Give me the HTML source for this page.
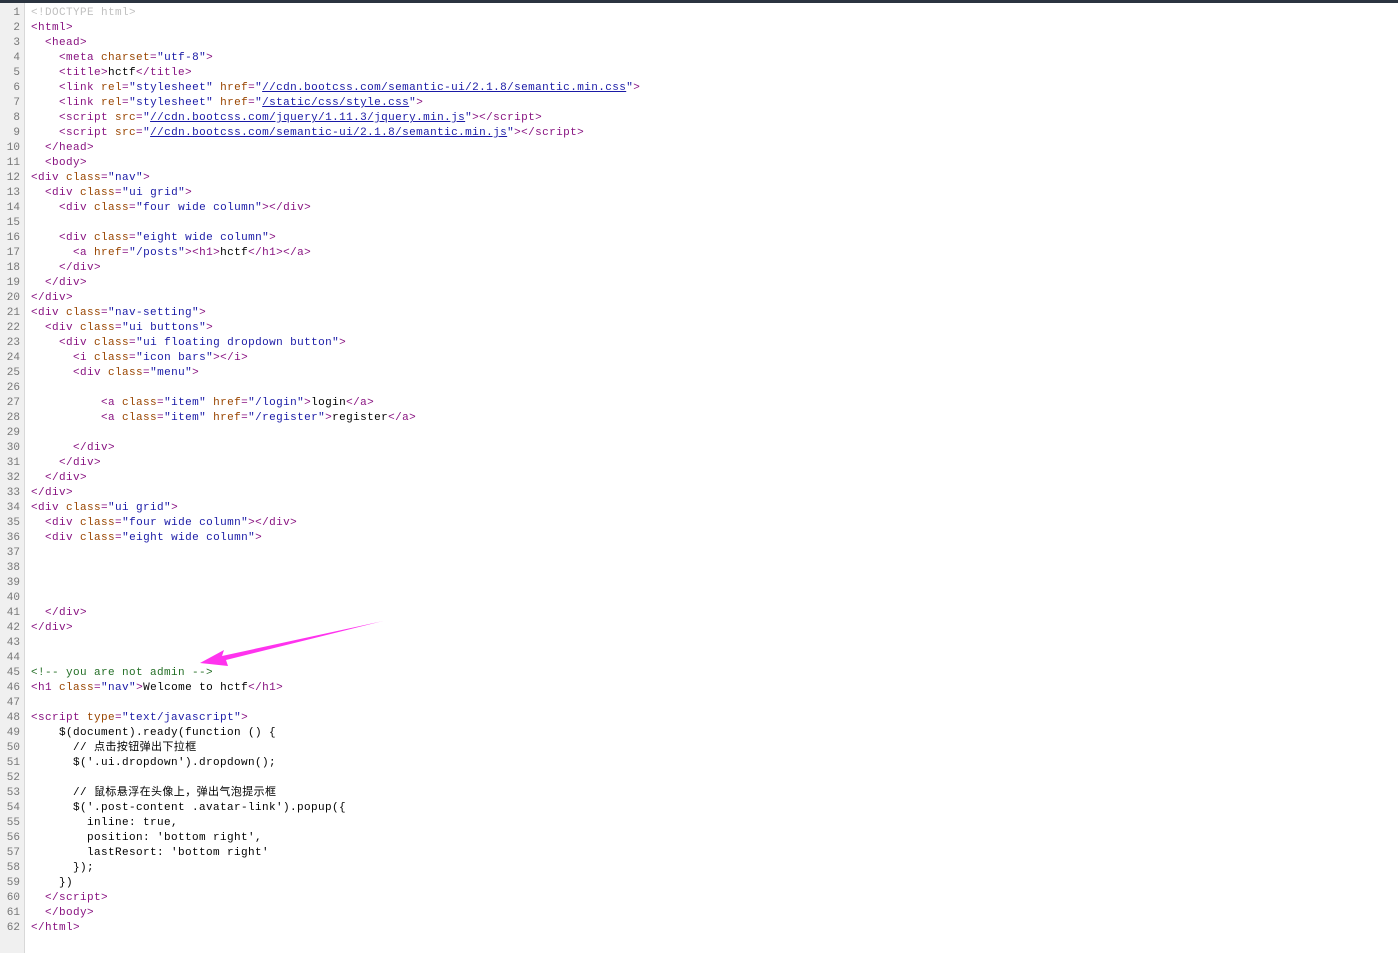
<!DOCTYPE html>
<html><head><meta charset="utf-8"><style>
html,body{margin:0;padding:0;background:#fff;width:1398px;height:953px;overflow:hidden}
#top{position:absolute;left:0;top:0;width:1398px;height:3px;background:#2b3440}
#gut{position:absolute;left:0;top:3px;width:24px;height:950px;background:#f0f0f0;border-right:1px solid #d8d8d8}
.ln{position:absolute;left:0;width:20px;text-align:right;font:11px "Liberation Mono",monospace;color:#777;line-height:15px}
.l{position:absolute;left:31px;font:11px "Liberation Mono","Noto Sans CJK SC",monospace;letter-spacing:0.4px;line-height:15px;white-space:pre;color:#000}
.t{color:#881280}.a{color:#994500}.v{color:#1a1aa6}.c{color:#236e25}.d{color:#c0c0c0}
.u{color:#1a1aa6;text-decoration:underline}
</style></head><body>
<div id="top"></div><div id="gut"></div>
<div id="c"></div>
<script>
var L=[
'<span class="d">&lt;!DOCTYPE html&gt;</span>',
'<span class="t">&lt;html&gt;</span>',
'  <span class="t">&lt;head&gt;</span>',
'    <span class="t">&lt;meta <span class="a">charset</span>=<span class="v">"utf-8"</span>&gt;</span>',
'    <span class="t">&lt;title&gt;</span>hctf<span class="t">&lt;/title&gt;</span>',
'    <span class="t">&lt;link <span class="a">rel</span>=<span class="v">"stylesheet"</span> <span class="a">href</span>=<span class="v">"<span class="u">//cdn.bootcss.com/semantic-ui/2.1.8/semantic.min.css</span>"</span>&gt;</span>',
'    <span class="t">&lt;link <span class="a">rel</span>=<span class="v">"stylesheet"</span> <span class="a">href</span>=<span class="v">"<span class="u">/static/css/style.css</span>"</span>&gt;</span>',
'    <span class="t">&lt;script <span class="a">src</span>=<span class="v">"<span class="u">//cdn.bootcss.com/jquery/1.11.3/jquery.min.js</span>"</span>&gt;&lt;/script&gt;</span>',
'    <span class="t">&lt;script <span class="a">src</span>=<span class="v">"<span class="u">//cdn.bootcss.com/semantic-ui/2.1.8/semantic.min.js</span>"</span>&gt;&lt;/script&gt;</span>',
'  <span class="t">&lt;/head&gt;</span>',
'  <span class="t">&lt;body&gt;</span>',
'<span class="t">&lt;div <span class="a">class</span>=<span class="v">"nav"</span>&gt;</span>',
'  <span class="t">&lt;div <span class="a">class</span>=<span class="v">"ui grid"</span>&gt;</span>',
'    <span class="t">&lt;div <span class="a">class</span>=<span class="v">"four wide column"</span>&gt;&lt;/div&gt;</span>',
'',
'    <span class="t">&lt;div <span class="a">class</span>=<span class="v">"eight wide column"</span>&gt;</span>',
'      <span class="t">&lt;a <span class="a">href</span>=<span class="v">"/posts"</span>&gt;&lt;h1&gt;</span>hctf<span class="t">&lt;/h1&gt;&lt;/a&gt;</span>',
'    <span class="t">&lt;/div&gt;</span>',
'  <span class="t">&lt;/div&gt;</span>',
'<span class="t">&lt;/div&gt;</span>',
'<span class="t">&lt;div <span class="a">class</span>=<span class="v">"nav-setting"</span>&gt;</span>',
'  <span class="t">&lt;div <span class="a">class</span>=<span class="v">"ui buttons"</span>&gt;</span>',
'    <span class="t">&lt;div <span class="a">class</span>=<span class="v">"ui floating dropdown button"</span>&gt;</span>',
'      <span class="t">&lt;i <span class="a">class</span>=<span class="v">"icon bars"</span>&gt;&lt;/i&gt;</span>',
'      <span class="t">&lt;div <span class="a">class</span>=<span class="v">"menu"</span>&gt;</span>',
'',
'          <span class="t">&lt;a <span class="a">class</span>=<span class="v">"item"</span> <span class="a">href</span>=<span class="v">"/login"</span>&gt;</span>login<span class="t">&lt;/a&gt;</span>',
'          <span class="t">&lt;a <span class="a">class</span>=<span class="v">"item"</span> <span class="a">href</span>=<span class="v">"/register"</span>&gt;</span>register<span class="t">&lt;/a&gt;</span>',
'',
'      <span class="t">&lt;/div&gt;</span>',
'    <span class="t">&lt;/div&gt;</span>',
'  <span class="t">&lt;/div&gt;</span>',
'<span class="t">&lt;/div&gt;</span>',
'<span class="t">&lt;div <span class="a">class</span>=<span class="v">"ui grid"</span>&gt;</span>',
'  <span class="t">&lt;div <span class="a">class</span>=<span class="v">"four wide column"</span>&gt;&lt;/div&gt;</span>',
'  <span class="t">&lt;div <span class="a">class</span>=<span class="v">"eight wide column"</span>&gt;</span>',
'','','','',
'  <span class="t">&lt;/div&gt;</span>',
'<span class="t">&lt;/div&gt;</span>',
'','',
'<span class="c">&lt;!-- you are not admin --&gt;</span>',
'<span class="t">&lt;h1 <span class="a">class</span>=<span class="v">"nav"</span>&gt;</span>Welcome to hctf<span class="t">&lt;/h1&gt;</span>',
'',
'<span class="t">&lt;script <span class="a">type</span>=<span class="v">"text/javascript"</span>&gt;</span>',
'    $(document).ready(function () {',
'      // 点击按钮弹出下拉框',
'      $(\'.ui.dropdown\').dropdown();',
'',
'      // 鼠标悬浮在头像上，弹出气泡提示框',
'      $(\'.post-content .avatar-link\').popup({',
'        inline: true,',
'        position: \'bottom right\',',
'        lastResort: \'bottom right\'',
'      });',
'    })',
'  <span class="t">&lt;/script&gt;</span>',
'  <span class="t">&lt;/body&gt;</span>',
'<span class="t">&lt;/html&gt;</span>'
];
var h='';
for(var i=0;i<L.length;i++){var y=6+i*15;
h+='<div class="ln" style="top:'+y+'px">'+(i+1)+'</div><div class="l" style="top:'+y+'px">'+L[i]+'</div>';}
document.getElementById('c').innerHTML=h;
</script>
<svg width="1398" height="953" style="position:absolute;left:0;top:0">
<path d="M383 621 L222 656 L224 650 L200 663 L228 666 L226 660 Z" fill="#ff33ee"/>
</svg>
</body></html>
